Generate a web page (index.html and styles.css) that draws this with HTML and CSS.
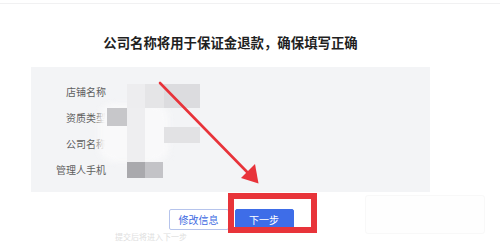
FILE: index.html
```html
<!DOCTYPE html>
<html lang="zh-CN">
<head>
<meta charset="utf-8">
<link rel="stylesheet" href="styles.css">
</head>
<body>
<div class="topline"></div>
<main class="wrap">
  <h1 class="title">公司名称将用于保证金退款，确保填写正确</h1>
  <section class="panel">
    <div class="row"><span class="label">店铺名称</span></div>
    <div class="row"><span class="label">资质类型</span></div>
    <div class="row"><span class="label">公司名称</span></div>
    <div class="row"><span class="label">管理人手机</span></div>
    <div class="mosaic">
      <i class="m blob"></i>
      <i class="m m0"></i>
      <i class="m m1"></i>
      <i class="m m2"></i>
      <i class="m m3"></i>
      <i class="m m4"></i>
      <i class="m m5"></i>
      <i class="m m6"></i>
      <i class="m m7"></i>
    </div>
  </section>
  <div class="actions">
    <button class="btn btn-ghost">修改信息</button>
    <button class="btn btn-primary">下一步</button>
  </div>
  <p class="note">提交后将进入下一步</p>
</main>
<div class="ghost-box"></div>
<svg class="arrow" width="500" height="243" viewBox="0 0 500 243">
  <line x1="160" y1="83" x2="250" y2="175" stroke="#e8333a" stroke-width="2.6" stroke-linecap="round"/>
  <polygon points="258.5,183.5 241,178 255,164" fill="#e8333a"/>
</svg>
<div class="redbox"></div>
</body>
</html>
```
FILE: styles.css
```css
html, body {
  margin: 0;
  padding: 0;
  background: #ffffff;
  overflow: hidden;
}
body {
  width: 500px;
  height: 243px;
  position: relative;
  font-family: "Noto Sans CJK SC", "Noto Sans", sans-serif;
}
.topline {
  margin-top: 3px;
  height: 1px;
  background: #f1f1f2;
}
.wrap {
  width: 399px;
  margin-left: 31px;
}
.title {
  margin: 28px 0 0;
  text-align: center;
  font-size: 13.4px;
  line-height: 20px;
  font-weight: 700;
  color: #1f1f1f;
  letter-spacing: 0;
}
.panel {
  position: relative;
  margin-top: 15px;
  height: 125px;
  box-sizing: border-box;
  padding: 11px 0 10px;
  background: #f3f4f6;
}
.row {
  height: 26px;
  display: flex;
  align-items: center;
}
.label {
  width: 75px;
  text-align: right;
  font-size: 10px;
  color: #5e5e5e;
  letter-spacing: 0;
}
.mosaic {
  position: absolute;
  inset: 0;
  pointer-events: none;
}
.m {
  position: absolute;
  display: block;
  filter: blur(0.6px);
}
.blob { left: 68px; top: 37px; width: 70px; height: 58px; background: #f9f9fa; border-radius: 14px; filter: blur(3px); }
.m0 { left: 96px; top: 17px; width: 18px; height: 24px; background: #ededef; }
.m1 { left: 114px; top: 17px; width: 19px; height: 24px; background: #e5e5e7; }
.m2 { left: 133px; top: 17px; width: 36px; height: 24px; background: #dcdcdf; }
.m3 { left: 76px; top: 41px; width: 20px; height: 18px; background: #c7c7ca; }
.m4 { left: 133px; top: 60px; width: 36px; height: 16px; background: #e2e2e4; }
.m5 { left: 96px; top: 95px; width: 18px; height: 16px; background: #a9a9ad; }
.m6 { left: 114px; top: 95px; width: 18px; height: 16px; background: #c3c3c7; }
.m7 { left: 96px; top: 41px; width: 18px; height: 54px; background: #eeeef0; }
.actions {
  display: flex;
  justify-content: center;
  gap: 6px;
  margin-top: 17px;
  padding-left: 1px;
}
.btn {
  height: 21px;
  width: 60px;
  padding: 0;
  font-family: inherit;
  font-size: 10px;
  border-radius: 2px;
  box-sizing: border-box;
}
.btn-ghost {
  background: #ffffff;
  border: 1px solid #b6c4ec;
  color: #3d6ae2;
}
.btn-primary {
  width: 59px;
  background: #3e6de8;
  border: 1px solid #3e6de8;
  color: #ffffff;
}
.note {
  margin: 2px 0 0 84px;
  font-size: 8px;
  line-height: 10px;
  color: #dedede;
}
.ghost-box {
  position: absolute;
  left: 365px;
  top: 195px;
  width: 118px;
  height: 37px;
  background: #fefefe;
  border: 1px solid #f8f8f8;
  border-radius: 3px;
}
.arrow {
  position: absolute;
  left: 0;
  top: 0;
  pointer-events: none;
}
.redbox {
  position: absolute;
  left: 228px;
  top: 193px;
  width: 89px;
  height: 40px;
  box-sizing: border-box;
  border: 6px solid #e8343a;
}
```
